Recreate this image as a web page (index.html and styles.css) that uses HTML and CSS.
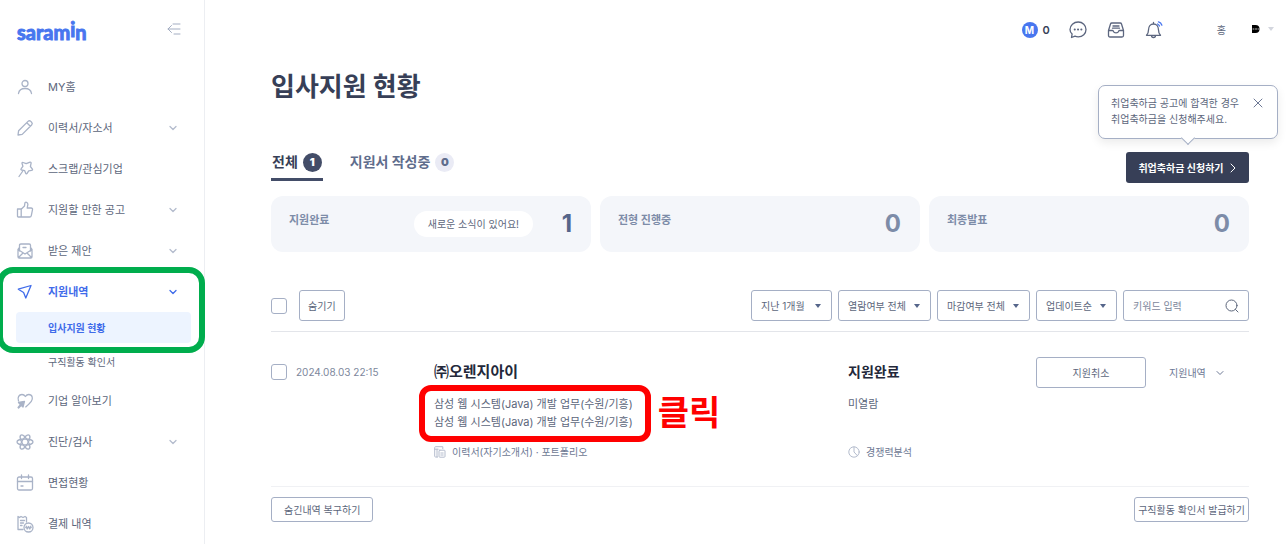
FILE: index.html
```html
<!DOCTYPE html>
<html lang="ko">
<head>
  <meta charset="UTF-8">
  <meta name="viewport" content="width=device-width, initial-scale=1.0">
  <title>입사지원 현황 - 사람인</title>
  <link rel="stylesheet" href="styles.css">
</head>
<body>
  <div class="page">
    <aside class="sidebar">
      <div class="brand">
        <a class="logo" href="#">saram<span>i</span>n</a>
        <button class="icon-btn" type="button" aria-label="메뉴 접기">
          <svg width="14" height="14" viewBox="0 0 14 14"><path d="M6 2h7M1 7h12M7 12h6M4.500 3.500L1 7l3.500 3.500"/></svg>
        </button>
      </div>

      <ul class="menu">
        <li>
          <a href="#">
            <svg class="ico" viewBox="0 0 18 18"><circle cx="9" cy="5.500" r="3"/><path d="M2.500 15.500c.5-3.200 3-5 6.500-5s6 1.800 6.500 5"/></svg>
            MY홈
          </a>
        </li>
        <li>
          <a href="#">
            <svg class="ico" viewBox="0 0 18 18"><path d="M2 16l.6-4.200L12 2.400a2 2 0 0 1 2.800 0l.8.8a2 2 0 0 1 0 2.800L6.200 15.400zM10.800 3.700l3.500 3.500"/></svg>
            이력서/자소서
            <svg class="arr" viewBox="0 0 8 8"><path d="M1 2.500l3 3 3-3"/></svg>
          </a>
        </li>
        <li>
          <a href="#">
            <svg class="ico" viewBox="0 0 18 18"><path d="M7 2.500l3.200 1.200 3.900-1.500c.7-.2 1.200.3 1 1l-.7 3.300 2 2.600c.4.700 0 1.300-.7 1.300l-3 .4-1.600 2.600c-.4.700-1.100.6-1.400-.1l-1.100-2.700-3-.6c-.8-.2-.9-.9-.4-1.400l1.700-2.300L6 3.300c0-.7.400-1 1-.8zM6.500 11.500L3 16.500"/></svg>
            스크랩/관심기업
          </a>
        </li>
        <li>
          <a href="#">
            <svg class="ico" viewBox="0 0 18 18"><path d="M1.500 8h3.700v8H2.300a.8.800 0 0 1-.8-.8zM5.200 8.200L8.500 5l.4-3c.3-1.400 3-.9 3 1.400L11.200 7H15c1.200 0 1.700.7 1.500 1.700l-1.200 5.900c-.2.900-.8 1.400-1.700 1.400H5.200"/></svg>
            지원할 만한 공고
            <svg class="arr" viewBox="0 0 8 8"><path d="M1 2.500l3 3 3-3"/></svg>
          </a>
        </li>
        <li>
          <a href="#">
            <svg class="ico" viewBox="0 0 18 18"><path d="M3.500 9V3.300c0-.9.500-1.300 1.300-1.300h8.400c.8 0 1.300.4 1.300 1.300V9M7 5.500h3M2 7.500v7.300c0 .8.400 1.200 1.200 1.200h11.600c.8 0 1.200-.4 1.200-1.200V7.500L9 12zM2 7.500l1.500-2M16 7.500l-1.500-2M2.500 15.500L7 11M15.500 15.500L11 11"/></svg>
            받은 제안
            <svg class="arr" viewBox="0 0 8 8"><path d="M1 2.500l3 3 3-3"/></svg>
          </a>
        </li>
        <li class="open">
          <a href="#">
            <svg class="ico" viewBox="0 0 18 18"><path d="M2.300 6.200L15 2.500 9.800 15 7.600 9.500z"/></svg>
            지원내역
            <svg class="arr" viewBox="0 0 8 8"><path d="M1 2.500l3 3 3-3"/></svg>
          </a>
          <ul class="sub">
            <li><a class="on" href="#">입사지원 현황</a></li>
            <li><a href="#">구직활동 확인서</a></li>
          </ul>
          <div class="mark mark-green"></div>
        </li>
        <li>
          <a href="#">
            <svg class="ico" viewBox="0 0 18 18"><path d="M2.500 9C1.200 5.500 3 2.500 6 2.500c1.600 0 2.600.8 3.400 2 .8-1.200 1.900-2 3.400-2 3.500 0 4.600 4 2.500 6.800-1.200 1.600-3.100 3.500-5.600 5.600"/><path class="fill" d="M2.500 10.500l6-1.200L7 15l-1.700-1.600L2.600 16l-.5-.5 2.300-2.800z"/></svg>
            기업 알아보기
          </a>
        </li>
        <li>
          <a href="#">
            <svg class="ico" viewBox="0 0 18 18"><ellipse cx="9" cy="9" rx="8" ry="3"/><ellipse cx="9" cy="9" rx="8" ry="3" transform="rotate(60 9 9)"/><ellipse cx="9" cy="9" rx="8" ry="3" transform="rotate(120 9 9)"/></svg>
            진단/검사
            <svg class="arr" viewBox="0 0 8 8"><path d="M1 2.500l3 3 3-3"/></svg>
          </a>
        </li>
        <li>
          <a href="#">
            <svg class="ico" viewBox="0 0 18 18"><rect x="1.500" y="3" width="15" height="13" rx="1.500"/><path d="M5.500 1v3.500M12.500 1v3.500M1.500 7.500h15M5 12h2"/></svg>
            면접현황
          </a>
        </li>
        <li>
          <a href="#">
            <svg class="ico" viewBox="0 0 18 18"><path d="M7 14.500H2v-13l1.500 1L5 1.500l2 1 2-1 1.500 1V7M4.500 5.500h4M4.500 8h3M4.500 10.500H6"/><circle cx="12.500" cy="12.500" r="4.500"/><path d="M10.200 11.200l1 2.800 1.300-2.500 1.300 2.500 1-2.800M9.800 12.500h5.400"/></svg>
            결제 내역
          </a>
        </li>
      </ul>
    </aside>

    <div class="content">
      <header class="topbar">
        <a class="point" href="#"><span class="badge-m">M</span>0</a>
        <div class="tools">
          <button class="icon-btn" type="button" aria-label="메시지">
            <svg width="18" height="18" viewBox="0 0 18 18"><path d="M9.200 1C13.700 1 17 4.300 17 8.500s-3.300 7.300-7.800 7.300c-1.100 0-2.200-.2-3.200-.6L2.500 16.500l.6-3.400C1.800 11.900 1 10.300 1 8.500 1 4.300 4.700 1 9.200 1z"/><path class="dots" d="M5.700 8.500h.1M9 8.500h.1M12.300 8.500h.1"/></svg>
          </button>
          <button class="icon-btn" type="button" aria-label="받은 제안함">
            <svg width="18" height="18" viewBox="0 0 18 18"><path d="M1.500 9.500L3.500 3c.2-.7.600-1 1.300-1h8.400c.7 0 1.100.3 1.300 1l2 6.500v5c0 .9-.5 1.500-1.500 1.500H3c-1 0-1.500-.6-1.500-1.500zM1.500 9.500h4c.6 0 .7.300.9.900.3.900.9 1.400 2.600 1.400s2.300-.5 2.600-1.400c.2-.6.3-.9.900-.9h4M6 5h6M5.500 7.200h7"/></svg>
          </button>
          <button class="icon-btn" type="button" aria-label="알림">
            <svg width="18" height="18" viewBox="0 0 18 18"><path d="M1.500 14.300c1.600-1.600 2-3 2-5.300C3.500 5.500 5.500 3 8.500 3s5 2.500 5 6c0 2.300.4 3.700 2 5.300zM8.500 3V1.500M6.500 14.500c0 1.200.7 2 2 2s2-.8 2-2"/><path class="blue" d="M12.500 3c1 .4 1.600 1 2 2M13.500.8c1.700.5 2.800 1.600 3.400 3.400"/></svg>
          </button>
        </div>
        <button class="user" type="button">
          <span>홍</span>
          <svg width="8" height="10" viewBox="0 0 8 10"><path d="M0 1h3.500a4 4 0 0 1 0 8H0z"/><path class="white" d="M1 5h1M4 4.500v1M6 5h.5"/></svg>
          <i class="caret"></i>
        </button>
      </header>

      <main>
        <h1>입사지원 현황</h1>

        <div class="tab-row">
          <nav class="tabs">
            <a class="on" href="#">전체 <b>1</b></a>
            <a href="#">지원서 작성중 <b>0</b></a>
          </nav>
          <div class="reward">
            <button class="reward-btn" type="button">취업축하금 신청하기
              <svg width="8" height="10" viewBox="0 0 8 10"><path d="M2 1l4 4-4 4"/></svg>
            </button>
            <div class="tip">
              <p>취업축하금 공고에 합격한 경우<br>취업축하금을 신청해주세요.</p>
              <button class="icon-btn" type="button" aria-label="닫기">
                <svg width="10" height="10" viewBox="0 0 10 10"><path d="M1 1l8 8M9 1L1 9"/></svg>
              </button>
            </div>
          </div>
        </div>

        <div class="stats">
          <a class="stat has" href="#"><span class="name">지원완료</span><span class="news">새로운 소식이 있어요!</span><strong>1</strong></a>
          <a class="stat" href="#"><span class="name">전형 진행중</span><strong>0</strong></a>
          <a class="stat" href="#"><span class="name">최종발표</span><strong>0</strong></a>
        </div>

        <form class="filters">
          <input type="checkbox" aria-label="전체 선택">
          <button class="btn" type="button">숨기기</button>
          <div class="selects">
            <label class="sel"><select aria-label="기간"><option>지난 1개월</option></select></label>
            <label class="sel wide"><select aria-label="열람여부"><option>열람여부 전체</option></select></label>
            <label class="sel wide"><select aria-label="마감여부"><option>마감여부 전체</option></select></label>
            <label class="sel"><select aria-label="정렬"><option>업데이트순</option></select></label>
            <div class="search">
              <input type="text" placeholder="키워드 입력" aria-label="키워드 입력">
              <button class="icon-btn" type="submit" aria-label="검색">
                <svg width="14" height="14" viewBox="0 0 14 14"><circle cx="6.500" cy="6.500" r="5.500"/><path d="M10.500 10.500L13 13"/></svg>
              </button>
            </div>
          </div>
        </form>

        <div class="apply">
          <label class="date"><input type="checkbox"> 2024.08.03 22:15</label>
          <div class="job">
            <h2><a href="#">㈜오렌지아이</a></h2>
            <div class="links">
              <a href="#">삼성 웹 시스템(Java) 개발 업무(수원/기흥)</a>
              <a href="#">삼성 웹 시스템(Java) 개발 업무(수원/기흥)</a>
              <div class="mark mark-red"></div>
              <span class="click">클릭</span>
            </div>
            <a class="meta" href="#">
              <svg width="12" height="12" viewBox="0 0 12 12"><path d="M3.500 11h-2a.8.800 0 0 1-.8-.8V1.500c0-.5.300-.8.800-.8h7.300v2M.7 3.200h3.500M3 3.200V11"/><rect x="5" y="4.200" width="6" height="7" rx=".8"/><path d="M6.800 7h2.400M6.800 9h2.400"/></svg>
              이력서(자기소개서) · 포트폴리오
            </a>
          </div>
          <div class="state">
            <h2>지원완료</h2>
            <p>미열람</p>
            <a class="meta" href="#">
              <svg width="12" height="12" viewBox="0 0 12 12"><circle cx="6" cy="6" r="5.200"/><path d="M6 1v5l3.500 3.800"/></svg>
              경쟁력분석
            </a>
          </div>
          <div class="act">
            <button class="btn cancel" type="button">지원취소</button>
            <button class="more" type="button">지원내역
              <svg width="8" height="8" viewBox="0 0 8 8"><path d="M1 2.500l3 3 3-3"/></svg>
            </button>
          </div>
        </div>

        <div class="bottom">
          <button class="btn small restore" type="button">숨긴내역 복구하기</button>
          <button class="btn small" type="button">구직활동 확인서 발급하기</button>
        </div>
      </main>
    </div>
  </div>
</body>
</html>
```
FILE: styles.css
```css
* {
  box-sizing: border-box;
}
body {
  margin: 0;
  background: #fff;
  color: #5c667b;
  font-family: Inter, "Noto Sans CJK KR", sans-serif;
  font-size: 11px;
  line-height: 16px;
}
a {
  color: inherit;
  text-decoration: none;
}
ul, p, h1, h2 {
  margin: 0;
  padding: 0;
  list-style: none;
}
button, input, select {
  font-family: inherit;
  font-size: 10px;
  color: inherit;
  margin: 0;
}
button {
  cursor: pointer;
  white-space: nowrap;
}
svg {
  display: block;
  flex: none;
  fill: none;
  stroke: currentColor;
  stroke-linecap: round;
  stroke-linejoin: round;
}
.icon-btn {
  border: 0;
  padding: 0;
  background: none;
}
.page {
  display: flex;
  align-items: flex-start;
}

/* sidebar */
.sidebar {
  width: 205px;
  flex: none;
  border-right: 1px solid #eceef2;
}
.brand {
  display: flex;
  justify-content: space-between;
  height: 66px;
  padding: 16px 23px 0 17px;
}
.brand .icon-btn {
  height: 26px;
  color: #a3adc2;
}
.logo {
  font-family: Lato, sans-serif;
  font-size: 20px;
  font-weight: 700;
  line-height: 32px;
  color: #4876ef;
  -webkit-text-stroke: 1px #4876ef;
}
.logo span {
  vertical-align: 3px;
  line-height: 1;
}
.menu a {
  display: flex;
  align-items: center;
  height: 41px;
  padding: 0 27px 0 16px;
  color: #5c667b;
}
.ico {
  width: 18px;
  height: 18px;
  margin-right: 14px;
  color: #a9b3c7;
  stroke-width: 1.3;
}
.ico .fill {
  fill: currentColor;
}
.arr {
  width: 8px;
  height: 8px;
  margin-left: auto;
  color: #b4bccd;
  stroke-width: 1.3;
}
.menu .open {
  position: relative;
}
.open > a,
.open > a svg {
  color: #3f6bea;
  font-weight: 700;
}
.menu .sub a {
  height: 37px;
  padding-left: 48px;
  font-size: 10px;
}
.menu .sub .on {
  height: 31px;
  margin: 0 13px 0 16px;
  padding-left: 32px;
  border-radius: 4px;
  background: #edf4ff;
  color: #3f6bea;
  font-weight: 700;
}

/* highlight frames */
.mark {
  position: absolute;
  pointer-events: none;
}
.mark-green {
  top: -4px;
  left: -3px;
  right: -1px;
  height: 86px;
  border: 6px solid #00ad4d;
  border-radius: 16px;
}
.mark-red {
  top: -10px;
  left: -15px;
  right: -18px;
  bottom: -11px;
  border: 6px solid #f00;
  border-radius: 12px;
}

/* top bar */
.content {
  flex: 1;
  min-width: 0;
}
.topbar {
  display: flex;
  justify-content: flex-end;
  align-items: center;
  height: 60px;
  padding-right: 14px;
}
.point {
  display: flex;
  gap: 5px;
  margin-right: 19px;
  color: #373f57;
  font-weight: 600;
}
.badge-m {
  width: 16px;
  border-radius: 50%;
  background: #4876ef;
  color: #fff;
  font-size: 10px;
  font-weight: 700;
  text-align: center;
}
.tools {
  display: flex;
  gap: 20px;
  margin-right: 54px;
  color: #5c667f;
}
.tools svg {
  stroke-width: 1.3;
}
.tools .dots {
  stroke-width: 2;
}
.tools .blue {
  stroke: #4876ef;
}
.user {
  display: flex;
  align-items: center;
  gap: 8px;
  padding: 0 0 2px;
  border: 0;
  background: none;
}
.user span {
  margin-right: 18px;
}
.user svg {
  fill: #000;
  stroke: none;
}
.user .white {
  stroke: #ccc;
}
.caret {
  border: 3px solid transparent;
  border-top: 4px solid #d3d6de;
  border-bottom: 0;
}

/* main */
main {
  padding: 7px 39px 20px 66px;
}
h1 {
  font-size: 26px;
  line-height: 40px;
  color: #373f57;
}
.tab-row {
  display: flex;
  justify-content: space-between;
  align-items: flex-end;
  margin-top: 39px;
}
.tabs {
  display: flex;
  gap: 26px;
}
.tabs a {
  display: flex;
  align-items: center;
  gap: 5px;
  height: 35px;
  padding: 0 1px;
  border-bottom: 3px solid transparent;
  font-size: 14px;
  font-weight: 700;
  color: #5f6d8c;
}
.tabs .on {
  border-color: #434d68;
  color: #373f57;
}
.tabs b {
  width: 19px;
  border-radius: 10px;
  background: #eaebf5;
  font-size: 11px;
  line-height: 19px;
  text-align: center;
}
.tabs .on b {
  background: #434d68;
  color: #fff;
}
.reward {
  position: relative;
  margin-bottom: -2px;
}
.reward-btn {
  display: flex;
  align-items: center;
  justify-content: center;
  gap: 5px;
  width: 123px;
  height: 31px;
  border: 0;
  border-radius: 3px;
  background: #373f57;
  color: #fff;
  font-weight: 700;
}
.tip {
  position: absolute;
  right: -29px;
  bottom: 44px;
  display: flex;
  justify-content: space-between;
  width: 180px;
  height: 54px;
  padding: 9px 14px 0 12px;
  border: 1px solid #a5afc5;
  border-radius: 7px;
  background: #fff;
  box-shadow: 0 4px 10px rgba(0, 0, 0, 0.08);
  font-size: 10px;
  white-space: nowrap;
}
.tip::after {
  content: "";
  position: absolute;
  left: 84px;
  bottom: -5px;
  width: 9px;
  height: 9px;
  border: solid #a5afc5;
  border-width: 0 1px 1px 0;
  background: #fff;
  transform: rotate(45deg);
}
.tip .icon-btn {
  height: 16px;
  color: #6d7894;
}
.stats {
  display: grid;
  grid-template-columns: repeat(3, 1fr);
  gap: 9px;
  margin-top: 15px;
}
.stat {
  display: flex;
  align-items: center;
  height: 56px;
  padding: 0 19px 0 18px;
  border-radius: 12px;
  background: #f4f6fa;
  color: #7d8ca8;
}
.stat .name {
  align-self: flex-start;
  margin: 16px auto 0 0;
  font-weight: 700;
}
.stat strong {
  width: 33px;
  font-size: 24px;
  line-height: 30px;
  text-align: right;
}
.stat.has strong {
  color: #55658a;
}
.news {
  margin-right: 6px;
  padding: 5px 14px;
  border-radius: 13px;
  background: #fff;
  color: #5c667b;
  font-size: 10px;
}

/* filters */
.filters {
  display: flex;
  align-items: center;
  margin-top: 38px;
  padding-bottom: 10px;
  border-bottom: 1px solid #e3e5ea;
}
input[type="checkbox"] {
  appearance: none;
  width: 16px;
  height: 16px;
  border: 1px solid #a5afc5;
  border-radius: 3px;
  background: #fff;
}
.btn {
  height: 31px;
  padding: 0 8px;
  border: 1px solid #a5afc5;
  border-radius: 3px;
  background: #fff;
}
.filters .btn {
  margin-left: 12px;
}
.selects {
  display: flex;
  gap: 6px;
  margin-left: auto;
}
.sel {
  position: relative;
  width: 81px;
}
.sel.wide {
  width: 93px;
}
.sel select {
  appearance: none;
  display: block;
  width: 100%;
  height: 31px;
  padding: 0 18px 0 9px;
  border: 1px solid #a5afc5;
  border-radius: 3px;
  background: #fff;
}
.sel::after {
  content: "";
  position: absolute;
  top: 14px;
  right: 11px;
  border: 3px solid transparent;
  border-top: 4px solid #55658a;
  border-bottom: 0;
  pointer-events: none;
}
.search {
  display: flex;
  align-items: center;
  width: 126px;
  height: 31px;
  padding: 0 9px;
  border: 1px solid #a5afc5;
  border-radius: 3px;
}
.search input {
  flex: 1;
  min-width: 0;
  padding: 0;
  border: 0;
  outline: none;
  background: none;
}
.search input::placeholder {
  color: #7d879c;
}

/* application row */
.apply {
  display: grid;
  grid-template-columns: 163fr 414fr 188fr 213fr;
  padding: 25px 0 26px;
  border-bottom: 1px solid #f0f1f4;
}
.date {
  display: flex;
  align-items: center;
  gap: 9px;
  height: 30px;
  color: #7d879c;
  font-size: 10px;
}
h2 {
  font-size: 14px;
  line-height: 30px;
  color: #23283a;
}
.job h2 {
  font-size: 15px;
}
.links {
  position: relative;
  width: fit-content;
  margin-top: 8px;
}
.links a {
  display: block;
  line-height: 18px;
}
.click {
  position: absolute;
  top: 1px;
  left: calc(100% + 25px);
  color: #f00;
  font-size: 34px;
  font-weight: 700;
  line-height: 34px;
  white-space: nowrap;
}
.meta {
  display: flex;
  align-items: center;
  gap: 6px;
  margin-top: 13px;
  color: #6d7894;
  font-size: 10px;
}
.meta svg {
  color: #b4bccd;
}
.state p {
  margin-top: 8px;
  line-height: 18px;
}
.state .meta {
  margin-top: 31px;
}
.act {
  display: flex;
  align-items: flex-start;
}
.cancel {
  width: 110px;
}
.more {
  display: flex;
  align-items: center;
  gap: 10px;
  height: 31px;
  margin-left: 23px;
  padding: 0;
  border: 0;
  background: none;
  color: #6d7894;
}
.bottom {
  display: flex;
  justify-content: space-between;
  margin-top: 10px;
}
.btn.small {
  height: 25px;
  padding: 0 3px;
}
.btn.restore {
  padding: 0 12px;
}
```
